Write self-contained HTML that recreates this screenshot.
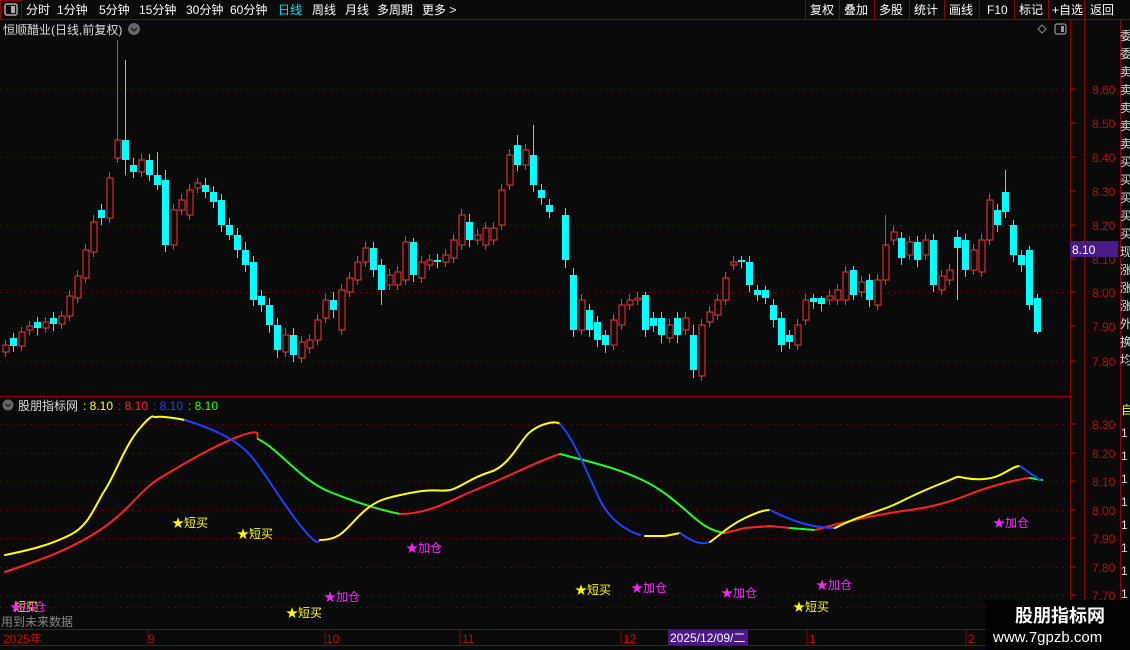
<!DOCTYPE html><html><head><meta charset="utf-8"><style>
body{margin:0;background:#0a0a0a;width:1130px;height:650px;overflow:hidden}
</style></head><body>
<svg width="1130" height="650" style="position:absolute;left:0;top:0" font-family="Liberation Sans, Noto Sans CJK SC, sans-serif" font-size="12">
<line x1="0" y1="19.5" x2="1130" y2="19.5" stroke="#8b0000"/>
<rect x="0.5" y="0.5" width="21" height="19" fill="none" stroke="#8b0000"/>
<rect x="5" y="4" width="12" height="11" rx="2" fill="none" stroke="#aaa" stroke-width="1.5"/><rect x="11" y="6" width="4" height="7" fill="#aaa"/>
<g fill="#fff">
<text x="26" y="14">分时</text><text x="57" y="14">1分钟</text><text x="99" y="14">5分钟</text><text x="139" y="14">15分钟</text><text x="186" y="14">30分钟</text><text x="230" y="14">60分钟</text>
<text x="278" y="14" fill="#00e0ff">日线</text><text x="312" y="14">周线</text><text x="345" y="14">月线</text><text x="377" y="14">多周期</text><text x="422" y="14">更多 &gt;</text>
</g>
<g stroke="#8b0000"><line x1="805.5" y1="0" x2="805.5" y2="19"/><line x1="839.5" y1="0" x2="839.5" y2="19"/><line x1="874.5" y1="0" x2="874.5" y2="19"/><line x1="909.5" y1="0" x2="909.5" y2="19"/><line x1="944.5" y1="0" x2="944.5" y2="19"/><line x1="979.5" y1="0" x2="979.5" y2="19"/><line x1="1014.5" y1="0" x2="1014.5" y2="19"/><line x1="1048.5" y1="0" x2="1048.5" y2="19"/><line x1="1084.5" y1="0" x2="1084.5" y2="19"/></g>
<g fill="#fff"><text x="810" y="14">复权</text><text x="844" y="14">叠加</text><text x="879" y="14">多股</text><text x="914" y="14">统计</text><text x="949" y="14">画线</text><text x="987" y="14">F10</text><text x="1019" y="14">标记</text><text x="1052" y="14">+自选</text><text x="1090" y="14">返回</text></g>
<text x="3" y="34" fill="#ddd">恒顺醋业(日线,前复权)</text>
<circle cx="134" cy="29" r="6" fill="#666"/><path d="M131 28l3 3 3-3" stroke="#222" fill="none" stroke-width="1.5"/>
<path d="M1042 25l4 4-4 4-4-4z" fill="none" stroke="#888"/>
<rect x="1055" y="24" width="11" height="10" rx="2" fill="none" stroke="#999" stroke-width="1.2"/><rect x="1061" y="26" width="3" height="6" fill="#999"/>
<line x1="1070.5" y1="20" x2="1070.5" y2="645" stroke="#8b0000"/>
<line x1="1084.5" y1="20" x2="1084.5" y2="650" stroke="#8b0000"/>
<line x1="1120.5" y1="20" x2="1120.5" y2="650" stroke="#8b0000"/>
<line x1="0" y1="396.5" x2="1070" y2="396.5" stroke="#8b0000" stroke-width="1.5"/>
<line x1="0" y1="629.5" x2="1070" y2="629.5" stroke="#8b0000"/>
<line x1="0" y1="645.5" x2="1084" y2="645.5" stroke="#8b0000"/>
<g stroke="#7a0000" stroke-dasharray="1,5">
<line x1="0" y1="89.5" x2="1068" y2="89.5"/><line x1="0" y1="157.5" x2="1068" y2="157.5"/><line x1="0" y1="225.5" x2="1068" y2="225.5"/><line x1="0" y1="292.5" x2="1068" y2="292.5"/><line x1="0" y1="361.5" x2="1068" y2="361.5"/>
<line x1="0" y1="424.5" x2="1068" y2="424.5"/><line x1="0" y1="453.5" x2="1068" y2="453.5"/><line x1="0" y1="481.5" x2="1068" y2="481.5"/><line x1="0" y1="510.5" x2="1068" y2="510.5"/><line x1="0" y1="538.5" x2="1068" y2="538.5"/><line x1="0" y1="567.5" x2="1068" y2="567.5"/><line x1="0" y1="595.5" x2="1068" y2="595.5"/><line x1="0" y1="607.5" x2="1068" y2="607.5"/>
</g>
<path stroke="#cc0000" d="M1070 89h6M1070 123h6M1070 157h6M1070 191h6M1070 225h6M1070 259h6M1070 292h6M1070 326h6M1070 361h6M1070 424h6M1070 453h6M1070 481h6M1070 510h6M1070 538h6M1070 567h6M1070 595h6"/>
<g fill="#cc0000">
<text x="1092" y="94">8.60</text><text x="1092" y="128">8.50</text><text x="1092" y="162">8.40</text><text x="1092" y="196">8.30</text><text x="1092" y="230">8.20</text><text x="1092" y="264">8.10</text><text x="1092" y="297">8.00</text><text x="1092" y="331">7.90</text><text x="1092" y="366">7.80</text>
<text x="1092" y="429">8.30</text><text x="1092" y="458">8.20</text><text x="1092" y="486">8.10</text><text x="1092" y="515">8.00</text><text x="1092" y="543">7.90</text><text x="1092" y="572">7.80</text><text x="1092" y="600">7.70</text>
</g>
<g stroke="#ff3030" fill="#0a0a0a" shape-rendering="crispEdges">
<path fill="none" d="M5.5 340V357M21.5 327V351M29.5 321V335M45.5 317V333M61.5 311V329M69.5 290V321M77.5 270V303M85.5 244V283M93.5 215V257M109.5 172V223M117.5 40V163M141.5 154V177M173.5 204V250M181.5 194V215M189.5 184V220M197.5 178V193M285.5 328V357M301.5 336V363M309.5 334V353M317.5 314V345M325.5 294V323M341.5 284V335M349.5 272V297M357.5 256V285M365.5 242V267M389.5 269V290M397.5 266V290M405.5 236V285M421.5 256V283M429.5 254V270M445.5 249V267M453.5 234V263M461.5 209V250M477.5 229V245M485.5 222V250M493.5 222V245M501.5 184V230M509.5 149V190M525.5 144V170M581.5 294V335M613.5 314V350M621.5 299V330M629.5 294V310M637.5 292V305M669.5 319V343M685.5 312V335M701.5 319V381M709.5 306V327M717.5 294V320M725.5 272V305M733.5 256V270M797.5 319V350M805.5 294V325M829.5 290V305M837.5 284V305M845.5 266V305M861.5 276V297M877.5 274V310M885.5 215V285M893.5 226V245M909.5 236V260M925.5 234V260M941.5 270V295M949.5 264V285M973.5 244V275M981.5 234V277M989.5 194V245"/>
<rect x="3" y="345" width="6" height="7"/><rect x="19" y="332" width="6" height="14"/><rect x="27" y="326" width="6" height="4"/><rect x="43" y="322" width="6" height="6"/><rect x="59" y="316" width="6" height="8"/><rect x="67" y="296" width="6" height="20"/><rect x="75" y="276" width="6" height="22"/><rect x="83" y="250" width="6" height="28"/><rect x="91" y="222" width="6" height="30"/><rect x="107" y="178" width="6" height="40"/><rect x="115" y="140" width="6" height="18"/><rect x="139" y="160" width="6" height="12"/><rect x="171" y="210" width="6" height="35"/><rect x="179" y="200" width="6" height="10"/><rect x="187" y="190" width="6" height="25"/><rect x="195" y="183" width="6" height="5"/>
<rect x="283" y="335" width="6" height="17"/><rect x="299" y="342" width="6" height="16"/><rect x="307" y="340" width="6" height="8"/><rect x="315" y="320" width="6" height="20"/><rect x="323" y="300" width="6" height="18"/><rect x="339" y="290" width="6" height="40"/><rect x="347" y="278" width="6" height="14"/><rect x="355" y="262" width="6" height="18"/><rect x="363" y="248" width="6" height="14"/><rect x="387" y="275" width="6" height="10"/><rect x="395" y="272" width="6" height="13"/><rect x="403" y="242" width="6" height="38"/><rect x="419" y="262" width="6" height="16"/><rect x="427" y="260" width="6" height="5"/><rect x="443" y="255" width="6" height="7"/><rect x="451" y="240" width="6" height="18"/><rect x="459" y="215" width="6" height="30"/><rect x="475" y="235" width="6" height="5"/><rect x="483" y="228" width="6" height="17"/><rect x="491" y="228" width="6" height="12"/><rect x="499" y="190" width="6" height="35"/><rect x="507" y="155" width="6" height="30"/><rect x="523" y="150" width="6" height="15"/>
<rect x="579" y="300" width="6" height="30"/><rect x="611" y="320" width="6" height="25"/><rect x="619" y="305" width="6" height="20"/><rect x="627" y="300" width="6" height="5"/><rect x="635" y="298" width="6" height="2"/><rect x="667" y="325" width="6" height="13"/><rect x="683" y="318" width="6" height="12"/><rect x="699" y="325" width="6" height="51"/><rect x="707" y="312" width="6" height="10"/><rect x="715" y="300" width="6" height="15"/><rect x="723" y="278" width="6" height="22"/><rect x="731" y="262" width="6" height="3"/>
<rect x="795" y="325" width="6" height="20"/><rect x="803" y="300" width="6" height="20"/><rect x="827" y="296" width="6" height="4"/><rect x="835" y="290" width="6" height="10"/><rect x="843" y="272" width="6" height="28"/><rect x="859" y="282" width="6" height="10"/><rect x="875" y="280" width="6" height="25"/><rect x="883" y="245" width="6" height="35"/><rect x="891" y="232" width="6" height="8"/><rect x="907" y="242" width="6" height="13"/><rect x="923" y="240" width="6" height="15"/><rect x="939" y="276" width="6" height="14"/><rect x="947" y="270" width="6" height="10"/><rect x="971" y="250" width="6" height="20"/><rect x="979" y="240" width="6" height="32"/><rect x="987" y="200" width="6" height="40"/>
</g>
<g fill="#00ffff">
<path stroke="#00ffff" fill="none" d="M13.5 333V352M37.5 317V335M53.5 312V331M101.5 204V225M125.5 60V175M133.5 158V178M149.5 154V181M157.5 152V190M165.5 170V252M205.5 178V198M213.5 186V208M221.5 194V232M229.5 218V240M237.5 228V258M245.5 242V272M253.5 256V306M261.5 290V312M269.5 298V333M277.5 318V358M293.5 328V362M333.5 292V318M373.5 242V277M381.5 259V305M413.5 238V282M437.5 254V268M469.5 214V247M517.5 135V171M533.5 125V192M541.5 184V205M549.5 199V218M565.5 208V268M573.5 268V337M589.5 304V337M597.5 316V347M605.5 330V353M645.5 292V337M653.5 312V332M661.5 312V343M677.5 312V343M693.5 325V378M741.5 256V268M749.5 256V292M757.5 285V301M765.5 286V304M773.5 299V327M781.5 312V352M789.5 330V349M813.5 294V309M821.5 296V311M853.5 266V300M869.5 274V307M901.5 232V265M917.5 236V267M933.5 234V292M957.5 230V300M965.5 234V277M997.5 204V232M1005.5 170V218M1013.5 220V262M1021.5 250V272M1029.5 246V310M1037.5 294V334"/>
<rect x="10" y="338" width="7" height="8"/><rect x="34" y="322" width="7" height="6"/><rect x="50" y="318" width="7" height="6"/><rect x="98" y="210" width="7" height="8"/><rect x="122" y="140" width="7" height="20"/><rect x="130" y="165" width="7" height="7"/><rect x="146" y="160" width="7" height="15"/><rect x="154" y="175" width="7" height="10"/><rect x="162" y="180" width="7" height="65"/><rect x="202" y="185" width="7" height="7"/><rect x="210" y="192" width="7" height="10"/><rect x="218" y="200" width="7" height="25"/><rect x="226" y="225" width="7" height="10"/><rect x="234" y="235" width="7" height="15"/><rect x="242" y="250" width="7" height="15"/><rect x="250" y="262" width="7" height="38"/><rect x="258" y="296" width="7" height="9"/><rect x="266" y="305" width="7" height="20"/><rect x="274" y="325" width="7" height="25"/><rect x="290" y="335" width="7" height="20"/><rect x="330" y="300" width="7" height="10"/><rect x="370" y="248" width="7" height="22"/><rect x="378" y="265" width="7" height="25"/><rect x="410" y="242" width="7" height="33"/><rect x="434" y="260" width="7" height="2"/><rect x="466" y="222" width="7" height="18"/><rect x="514" y="145" width="7" height="20"/><rect x="530" y="155" width="7" height="30"/><rect x="538" y="190" width="7" height="8"/><rect x="546" y="205" width="7" height="7"/><rect x="562" y="215" width="7" height="45"/><rect x="570" y="275" width="7" height="55"/><rect x="586" y="310" width="7" height="20"/><rect x="594" y="322" width="7" height="18"/><rect x="602" y="335" width="7" height="10"/><rect x="642" y="295" width="7" height="35"/><rect x="650" y="318" width="7" height="8"/><rect x="658" y="318" width="7" height="17"/><rect x="674" y="318" width="7" height="17"/><rect x="690" y="335" width="7" height="35"/><rect x="738" y="260" width="7" height="2"/><rect x="746" y="262" width="7" height="23"/><rect x="754" y="290" width="7" height="5"/><rect x="762" y="290" width="7" height="8"/><rect x="770" y="305" width="7" height="15"/><rect x="778" y="318" width="7" height="27"/><rect x="786" y="335" width="7" height="7"/><rect x="810" y="298" width="7" height="4"/><rect x="818" y="298" width="7" height="6"/><rect x="850" y="270" width="7" height="25"/><rect x="866" y="280" width="7" height="20"/><rect x="898" y="238" width="7" height="20"/><rect x="914" y="242" width="7" height="18"/><rect x="930" y="240" width="7" height="45"/><rect x="954" y="237" width="7" height="11"/><rect x="962" y="240" width="7" height="30"/><rect x="994" y="210" width="7" height="15"/><rect x="1002" y="192" width="7" height="20"/><rect x="1010" y="225" width="7" height="30"/><rect x="1018" y="255" width="7" height="10"/><rect x="1026" y="250" width="7" height="55"/><rect x="1034" y="298" width="7" height="34"/>
</g>
<g fill="none" stroke-width="2" stroke-linejoin="round" stroke-linecap="round">
<path stroke="#ff2020" d="M5 572C40 560 70 550 100 530S140 490 160 478S215 445 240 436S255 437 258 439"/>
<path stroke="#20ff20" d="M258 439C280 450 300 480 330 492S380 510 400 514"/>
<path stroke="#ff2020" d="M400 514C430 514 450 500 480 488S540 460 560 454"/>
<path stroke="#20ff20" d="M560 454C590 462 630 470 660 490S700 530 725 533"/>
<path stroke="#ff2020" d="M725 533L745 528L770 526L790 528"/>
<path stroke="#20ff20" d="M790 528L815 530"/>
<path stroke="#ff2020" d="M815 530C850 520 880 514 910 510S960 498 970 494S1010 480 1030 478"/>
<path stroke="#20ff20" d="M1030 478L1042 480"/>
<path stroke="#ffff00" d="M5 555C30 550 50 545 70 535S95 505 105 490S125 445 140 428S152 418 156 417S175 418 185 420"/>
<path stroke="#2040ff" d="M185 420C210 428 235 438 250 455S280 500 300 525S318 540 320 540"/>
<path stroke="#ffff00" d="M320 540C340 540 345 530 360 515S385 498 410 493S440 492 450 490S470 478 490 472S520 440 530 432S555 420 560 424"/>
<path stroke="#2040ff" d="M560 424C575 440 590 480 600 500S625 530 640 535"/>
<path stroke="#ffff00" d="M645 536L665 536L680 533"/>
<path stroke="#2040ff" d="M680 533C690 540 700 546 710 542"/>
<path stroke="#ffff00" d="M710 542C720 535 730 525 745 518S765 510 770 510"/>
<path stroke="#2040ff" d="M770 510C790 520 810 528 835 528"/>
<path stroke="#ffff00" d="M835 528C860 515 880 512 900 502S930 488 945 482S955 476 965 478S990 480 1000 475S1015 466 1020 466"/>
<path stroke="#2040ff" d="M1020 466L1040 480"/>
</g>
<circle cx="8" cy="405" r="5.5" fill="#666"/><path d="M5.5 404l2.5 2.5 2.5-2.5" stroke="#222" fill="none" stroke-width="1.3"/>
<text x="18" y="410" fill="#ddd">股朋指标网</text>
<text x="83" y="410" fill="#ffff00">: 8.10</text><text x="118" y="410" fill="#ff2020">: 8.10</text><text x="153" y="410" fill="#2040ff">: 8.10</text><text x="188" y="410" fill="#20ff20">: 8.10</text>
<text x="172" y="527" fill="#ffff00">★短买</text><text x="237" y="538" fill="#ffff00">★短买</text><text x="286" y="617" fill="#ffff00">★短买</text><text x="575" y="594" fill="#ffff00">★短买</text><text x="793" y="611" fill="#ffff00">★短买</text>
<text x="324" y="601" fill="#ff20ff">★加仓</text><text x="406" y="552" fill="#ff20ff">★加仓</text><text x="631" y="592" fill="#ff20ff">★加仓</text><text x="721" y="597" fill="#ff20ff">★加仓</text><text x="816" y="589" fill="#ff20ff">★加仓</text><text x="993" y="527" fill="#ff20ff">★加仓</text>
<text x="14" y="611" fill="#ffff00">短买</text><text x="10" y="611" fill="#ff20ff">★加仓</text>
<text x="1" y="626" fill="#888">用到未来数据</text>
<g fill="#cc0000"><text x="3" y="643">2025年</text><text x="148" y="643">9</text><text x="326" y="643">10</text><text x="462" y="643">11</text><text x="623" y="643">12</text><text x="968" y="643">2</text><text x="809" y="643">1</text></g>
<g stroke="#8b0000"><line x1="148" y1="630" x2="148" y2="645"/><line x1="325" y1="630" x2="325" y2="645"/><line x1="460" y1="630" x2="460" y2="645"/><line x1="621" y1="630" x2="621" y2="645"/><line x1="807" y1="630" x2="807" y2="645"/><line x1="966" y1="630" x2="966" y2="645"/></g>
<rect x="668" y="630" width="80" height="15" fill="#4a1a8a"/><text x="670" y="642" fill="#fff">2025/12/09/二</text>
<rect x="1070" y="241" width="48" height="16" fill="#4a1a8a"/><text x="1072" y="254" fill="#fff">8.10</text>
<g fill="#ddd">
<text x="1120" y="40">委</text><text x="1120" y="58">委</text><text x="1120" y="76">卖</text><text x="1120" y="94">卖</text><text x="1120" y="112">卖</text><text x="1120" y="130">卖</text><text x="1120" y="148">卖</text><text x="1120" y="166">买</text><text x="1120" y="184">买</text><text x="1120" y="202">买</text><text x="1120" y="220">买</text><text x="1120" y="238">买</text><text x="1120" y="256">现</text><text x="1120" y="274">涨</text><text x="1120" y="292">涨</text><text x="1120" y="310">涨</text><text x="1120" y="328">外</text><text x="1120" y="346">换</text><text x="1120" y="364">均</text>
<text x="1121" y="414" fill="#ffff00">自</text><text x="1121" y="437">1</text><text x="1121" y="460">1</text><text x="1121" y="483">1</text><text x="1121" y="506">1</text><text x="1121" y="529">1</text><text x="1121" y="552">1</text><text x="1121" y="575">1</text><text x="1121" y="598">1</text>
</g>
<rect x="985" y="600" width="145" height="50" fill="#000"/>
<text x="1015" y="622" fill="#fff" font-size="18" font-weight="bold">股朋指标网</text>
<text x="993" y="642" fill="#fff" font-size="15">www.7gpzb.com</text>
</svg>
</body></html>
